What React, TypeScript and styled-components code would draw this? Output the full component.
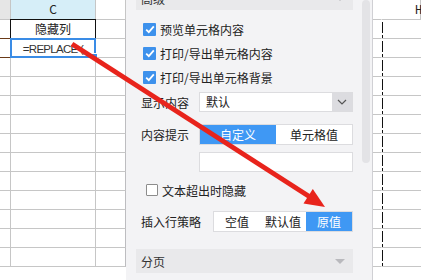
import { Fragment } from "react";
import styled, { createGlobalStyle } from "styled-components";

const GlobalStyle = createGlobalStyle`
  html, body {
    margin: 0;
    padding: 0;
    background: #ffffff;
  }
`;

const CJK = `"Noto Sans CJK SC", "Noto Sans", sans-serif`;

const Screen = styled.div`
  position: relative;
  width: 421px;
  height: 280px;
  overflow: hidden;
  display: flex;
  font-family: ${CJK};
  color: #222;
`;

/* ---------- spreadsheet ---------- */

const Sheet = styled.div<{ $cols: string }>`
  display: grid;
  grid-template-columns: ${(p) => p.$cols};
  grid-template-rows: 20px;
  grid-auto-rows: 19px;
  align-content: start;
  flex: none;
  background: #fff;
`;

type Mark = "none" | "black" | "blue" | "brown";

const Cell = styled.div<{ $bg?: string; $line?: string; $mark?: Mark }>`
  position: relative;
  box-sizing: border-box;
  border-right: 1px solid ${(p) => p.$line || "#c6c6c6"};
  border-bottom: 1px solid #c6c6c6;
  background: ${(p) => p.$bg || "#fff"};
  font-size: 12px;
  line-height: 18px;
  text-align: center;
  white-space: nowrap;
  overflow: visible;
  z-index: ${(p) => (p.$mark && p.$mark !== "none" ? 2 : 0)};
  &::after {
    content: "";
    display: ${(p) => (p.$mark && p.$mark !== "none" ? "block" : "none")};
    position: absolute;
    left: -1px;
    top: -1px;
    right: -1px;
    bottom: -1px;
    border: ${(p) =>
      p.$mark === "blue"
        ? "2px solid #3a8ce6"
        : p.$mark === "brown"
        ? "1px solid #6a3a18"
        : "1px solid #111"};
    pointer-events: none;
  }
`;

const Formula = styled.span`
  font-family: "Liberation Sans", Arial, sans-serif;
  font-size: 11.5px;
  letter-spacing: -0.7px;
  color: #333;
`;

const FillHandle = styled.span`
  position: absolute;
  right: -3px;
  bottom: -3px;
  width: 5px;
  height: 5px;
  background: #3a8ce6;
  border: 1px solid #fff;
  z-index: 3;
`;

const DashedCell = styled(Cell)`
  border-right: none;
  &::before {
    content: "";
    position: absolute;
    left: 0;
    top: 0;
    bottom: 0;
    width: 1px;
    background: repeating-linear-gradient(
      to bottom,
      transparent 0 2px,
      #111 2px 13px
    );
  }
`;

const HeadLetter = styled.span`
  font-family: "Liberation Mono", "DejaVu Sans Mono", monospace;
  font-size: 12px;
  display: block;
  text-align: left;
  padding-left: 33px;
  line-height: 22px;
`;

/* ---------- settings panel ---------- */

const Panel = styled.div`
  flex: none;
  width: 247px;
  box-sizing: border-box;
  border-right: 1px solid #d0d0d4;
  background: #f3f3f5;
  display: flex;
  align-items: flex-start;
  padding-left: 10px;
`;

const PanelBody = styled.div`
  width: 217px;
  display: flex;
  flex-direction: column;
  font-size: 12px;
`;

const Scrollbar = styled.div`
  width: 8px;
  height: 163px;
  margin-left: 9px;
  border-radius: 4px;
  background: #e3e3e6;
`;

const Section = styled.div<{ $top: number }>`
  height: 24px;
  margin-top: ${(p) => p.$top}px;
  background: #e9e9eb;
  display: flex;
  align-items: center;
  justify-content: space-between;
  padding: 0 8px 0 5px;
  color: #333;
`;

const Caret = styled.span`
  width: 0;
  height: 0;
  border-left: 5px solid transparent;
  border-right: 5px solid transparent;
  border-top: 5px solid #b9b9bd;
`;

const CheckRow = styled.label<{ $indent: number; $top?: number }>`
  height: 24px;
  margin-top: ${(p) => p.$top || 0}px;
  display: flex;
  align-items: center;
  padding-left: ${(p) => p.$indent}px;
  gap: 4px;
  color: #222;
`;

const Box = styled.span<{ $on: boolean }>`
  box-sizing: border-box;
  width: ${(p) => (p.$on ? 13 : 12)}px;
  height: ${(p) => (p.$on ? 13 : 12)}px;
  border-radius: 1px;
  background: ${(p) => (p.$on ? "#3d91ec" : "#fff")};
  border: ${(p) => (p.$on ? "none" : "1px solid #8c8c8c")};
  display: flex;
  align-items: center;
  justify-content: center;
`;

const FieldRow = styled.div<{ $top: number; $h: number }>`
  display: flex;
  align-items: center;
  margin-top: ${(p) => p.$top}px;
  height: ${(p) => p.$h}px;
`;

const Label = styled.span<{ $w: number }>`
  width: ${(p) => p.$w}px;
  flex: none;
  padding-left: 5px;
  box-sizing: border-box;
  color: #222;
`;

const Select = styled.div`
  flex: 1;
  height: 20px;
  box-sizing: border-box;
  border: 1px solid #dcdcdf;
  background: #fff;
  display: flex;
  align-items: stretch;
`;

const SelectValue = styled.span`
  flex: 1;
  padding-left: 6px;
  line-height: 18px;
`;

const SelectArrow = styled.span`
  width: 20px;
  background: #dcdce0;
  display: flex;
  align-items: center;
  justify-content: center;
`;

const Segments = styled.div`
  flex: 1;
  height: 21px;
  box-sizing: border-box;
  border: 1px solid #dcdcdf;
  background: #fff;
  display: flex;
`;

const Segment = styled.span<{ $on?: boolean }>`
  flex: 1;
  display: flex;
  align-items: center;
  justify-content: center;
  background: ${(p) => (p.$on ? "#3f98f4" : "#fff")};
  color: ${(p) => (p.$on ? "#fff" : "#222")};
`;

const TextInput = styled.div`
  margin: 7px 0 0 63px;
  height: 20px;
  box-sizing: border-box;
  border: 1px solid #dcdcdf;
  background: #fff;
`;

const Overlay = styled.svg`
  position: absolute;
  left: 0;
  top: 0;
  pointer-events: none;
  z-index: 10;
`;

const Check = () => (
  <svg width="10" height="9" viewBox="0 0 10 9">
    <path d="M1.2 4.6 L3.8 7.2 L8.8 1.4" fill="none" stroke="#fff" strokeWidth="1.8" />
  </svg>
);

const ROWS = 13;

export default function App() {
  const rows = Array.from({ length: ROWS }, (_, i) => i);
  return (
    <Screen>
      <GlobalStyle />
      <Sheet $cols="11px 85px 30px">
        <Cell $bg="#e6e6e6" />
        <Cell $bg="#d6eef8">C</Cell>
        <Cell />
        {rows.map((r) => (
          <Fragment key={r}>
            <Cell $mark={r === 1 ? "brown" : "none"} />
            <Cell $mark={r === 0 ? "black" : r === 1 ? "blue" : "none"}>
              {r === 0 && "隐藏列"}
              {r === 1 && (
                <>
                  <Formula>=REPLACE (</Formula>
                  <FillHandle />
                </>
              )}
            </Cell>
            <Cell $line="#bdbdc0" />
          </Fragment>
        ))}
      </Sheet>

      <Panel>
        <PanelBody>
          <Section $top={-14}>
            <span>高级</span>
            <Caret />
          </Section>
          <CheckRow $indent={7} $top={7}>
            <Box $on><Check /></Box>预览单元格内容
          </CheckRow>
          <CheckRow $indent={7}>
            <Box $on><Check /></Box>打印/导出单元格内容
          </CheckRow>
          <CheckRow $indent={7}>
            <Box $on><Check /></Box>打印/导出单元格背景
          </CheckRow>
          <FieldRow $top={0} $h={26}>
            <Label $w={63}>显示内容</Label>
            <Select>
              <SelectValue>默认</SelectValue>
              <SelectArrow>
                <svg width="10" height="6" viewBox="0 0 10 6">
                  <path d="M1 1 L5 5 L9 1" fill="none" stroke="#555" strokeWidth="1.2" />
                </svg>
              </SelectArrow>
            </Select>
          </FieldRow>
          <FieldRow $top={9} $h={21}>
            <Label $w={63}>内容提示</Label>
            <Segments>
              <Segment $on>自定义</Segment>
              <Segment>单元格值</Segment>
            </Segments>
          </FieldRow>
          <TextInput />
          <CheckRow $indent={10} $top={6}>
            <Box $on={false} />文本超出时隐藏
          </CheckRow>
          <FieldRow $top={9} $h={21}>
            <Label $w={77}>插入行策略</Label>
            <Segments>
              <Segment>空值</Segment>
              <Segment>默认值</Segment>
              <Segment $on>原值</Segment>
            </Segments>
          </FieldRow>
          <Section $top={17}>
            <span>分页</span>
            <Caret />
          </Section>
        </PanelBody>
        <Scrollbar />
      </Panel>

      <Sheet $cols="9px 39px">
        <Cell $line="transparent" />
        <Cell>
          <HeadLetter>H</HeadLetter>
        </Cell>
        {rows.map((r) => (
          <Fragment key={r}>
            <Cell $line="transparent" />
            <DashedCell />
          </Fragment>
        ))}
      </Sheet>

      <Overlay width="421" height="280" viewBox="0 0 421 280">
        <line x1="72" y1="44" x2="310" y2="197" stroke="#e8241c" strokeWidth="5" />
        <polygon points="325,207 303.5,203.5 312.8,189" fill="#e8241c" />
      </Overlay>
    </Screen>
  );
}
